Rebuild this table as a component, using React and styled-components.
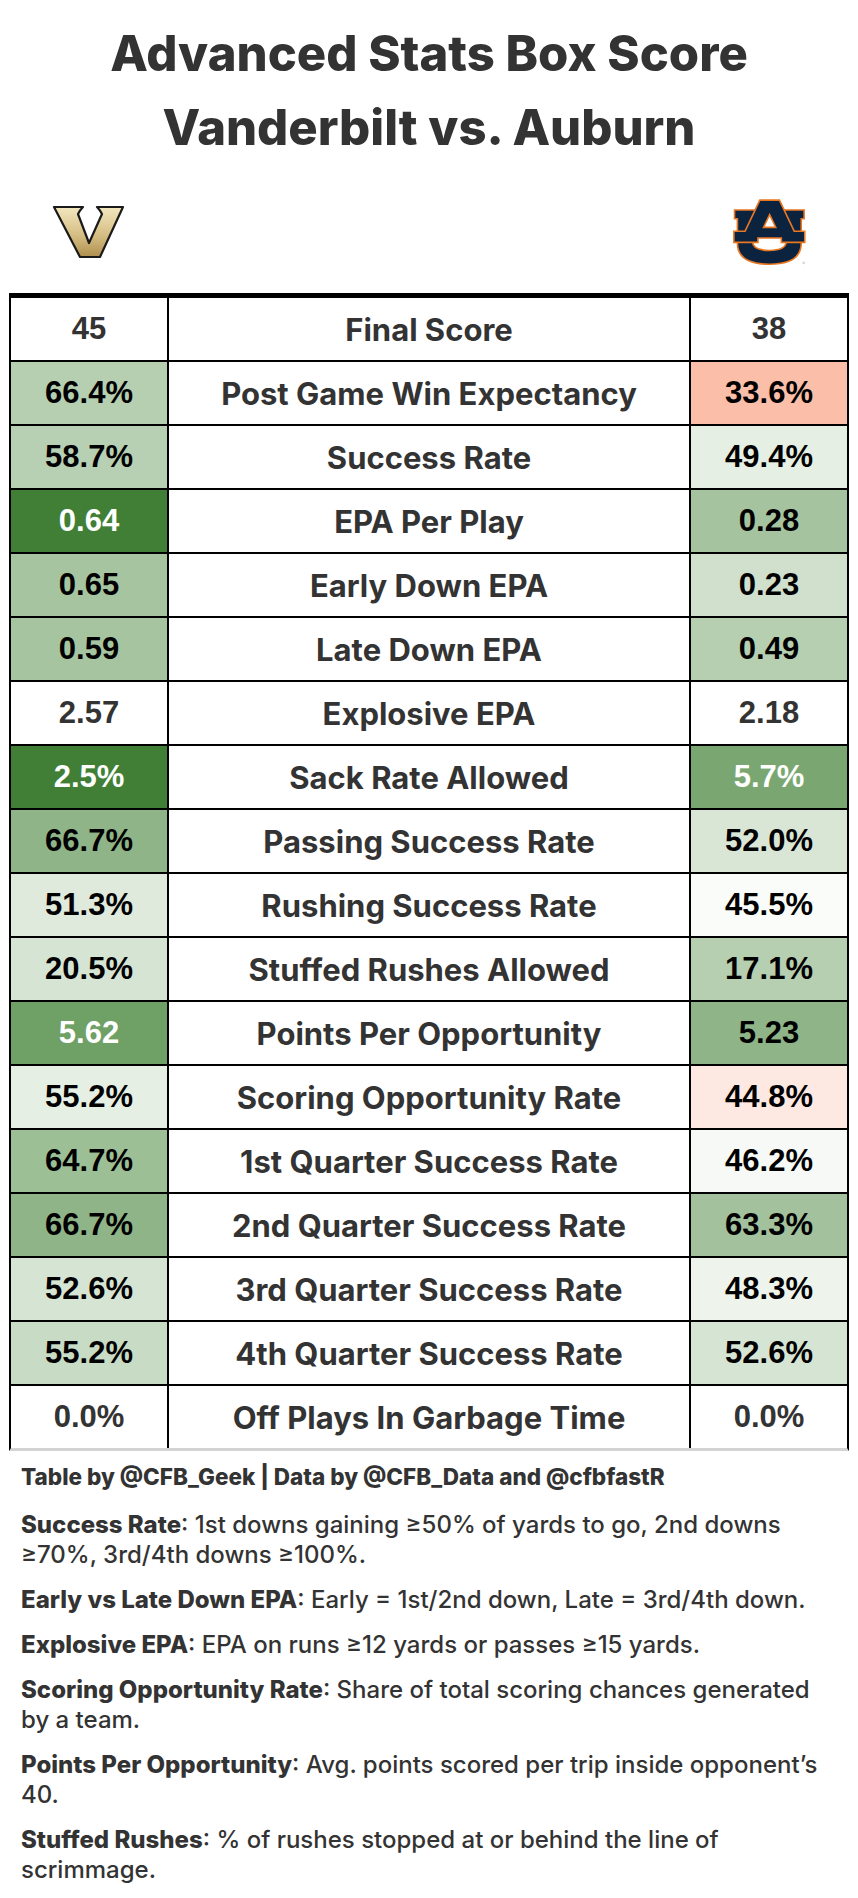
import React from 'react';
import styled, { createGlobalStyle } from 'styled-components';

const GlobalStyle = createGlobalStyle`
  html, body {
    margin: 0;
    padding: 0;
    background: #ffffff;
  }
  body {
    font-family: "Inter", "Roboto", sans-serif;
    color: #333333;
  }
`;

const Page = styled.div`
  width: 858px;
  padding: 17px 9px 20px;
  box-sizing: border-box;
`;

const Title = styled.h1`
  margin: 0;
  text-align: center;
  font-family: "Inter", sans-serif;
  font-weight: 800;
  font-size: 49px;
  line-height: 74px;
  color: #333333;
`;

const LogoRow = styled.div`
  display: grid;
  grid-template-columns: 158px 522px 160px;
  align-items: center;
  justify-items: center;
  height: 122px;
  padding-top: 6px;
`;

const Table = styled.div`
  display: flex;
  flex-direction: column;
  gap: 2px;
  background: #000000;
  border-top: 5px solid #000000;
  border-left: 2px solid #000000;
  border-right: 2px solid #000000;
  border-bottom: 3px solid #d3d3d3;
`;

const Row = styled.div`
  display: grid;
  grid-template-columns: 156px 520px 156px;
  column-gap: 2px;
  height: 62px;
`;

const ValueCell = styled.div`
  display: flex;
  align-items: center;
  justify-content: center;
  background: ${({ $bg }) => $bg || '#ffffff'};
  color: ${({ $fg }) => $fg || '#000000'};
  font-family: "Liberation Sans", Arial, sans-serif;
  font-weight: 700;
  font-size: 31px;
`;

const LabelCell = styled.div`
  display: flex;
  align-items: center;
  justify-content: center;
  background: #ffffff;
  color: #333333;
  font-family: "Inter", sans-serif;
  font-weight: 700;
  font-size: 31px;
`;

const Notes = styled.div`
  width: 812px;
  padding: 11px 12px 0;
  font-family: "Inter", sans-serif;
  font-size: 24px;
  line-height: 30px;
  color: #333333;
  font-weight: 500;
`;

const Credit = styled.p`
  margin: 0 0 18px;
  font-size: 22.5px;
  font-weight: 800;
`;

const Note = styled.p`
  margin: 0 0 15px;
  b {
    font-weight: 800;
  }
`;

const VandyLogo = () => (
  <svg width="72" height="54" viewBox="-1 -1 72 54">
    <defs>
      <linearGradient id="vgold" x1="0" y1="0" x2="0" y2="1">
        <stop offset="0" stopColor="#f3e7bf" />
        <stop offset="0.55" stopColor="#d6bf85" />
        <stop offset="1" stopColor="#b08f4f" />
      </linearGradient>
    </defs>
    <path
      d="M1 1 H30 Q27 4 25 8 L36 37 L49 8 Q47 4 44 1 H70 L47 51 H27 Z"
      fill="url(#vgold)"
      stroke="#1a1a1a"
      strokeWidth="2.2"
      strokeLinejoin="round"
    />
  </svg>
);

const AuburnLogo = () => (
  <svg width="74" height="68" viewBox="60 24 230 212">
    <g fill="#0c2340" stroke="#e87722" strokeWidth="10" strokeLinejoin="miter" paintOrder="stroke">
      <path d="M70 64 H130 V86 H121 V160 Q121 190 176 190 Q231 190 231 160 V86 H222 V64 H282 V86 H273 V165 Q273 228 176 228 Q79 228 79 165 V86 H70 Z" />
      <path
        fillRule="evenodd"
        d="M148 33 H206 L252 130 H284 V160 H216 V146 H138 V160 H68 V130 H102 Z M177 70 L154 118 H200 Z"
      />
    </g>
    <circle cx="283" cy="226" r="3" fill="none" stroke="#777" strokeWidth="1" />
  </svg>
);

const rows = [
  { l: '66.4%', label: 'Post Game Win Expectancy', r: '33.6%', lb: '#b5cfb0', rb: '#fbbea8' },
  { l: '58.7%', label: 'Success Rate', r: '49.4%', lb: '#b7cfb2', rb: '#e6efe3' },
  { l: '0.64', label: 'EPA Per Play', r: '0.28', lb: '#417f37', lf: '#ffffff', rb: '#a6c39f' },
  { l: '0.65', label: 'Early Down EPA', r: '0.23', lb: '#a7c4a1', rb: '#d0e0cc' },
  { l: '0.59', label: 'Late Down EPA', r: '0.49', lb: '#a7c4a1', rb: '#b6cfb1' },
  { l: '2.57', label: 'Explosive EPA', r: '2.18', lf: '#333333', rf: '#333333' },
  { l: '2.5%', label: 'Sack Rate Allowed', r: '5.7%', lb: '#417f37', lf: '#ffffff', rb: '#7aa771', rf: '#ffffff' },
  { l: '66.7%', label: 'Passing Success Rate', r: '52.0%', lb: '#8fb487', rb: '#d9e6d6' },
  { l: '51.3%', label: 'Rushing Success Rate', r: '45.5%', lb: '#dfe9dc', rb: '#fafcfa' },
  { l: '20.5%', label: 'Stuffed Rushes Allowed', r: '17.1%', lb: '#d6e4d3', rb: '#b6cfb1' },
  { l: '5.62', label: 'Points Per Opportunity', r: '5.23', lb: '#6fa066', lf: '#ffffff', rb: '#8fb487' },
  { l: '55.2%', label: 'Scoring Opportunity Rate', r: '44.8%', lb: '#e6efe4', rb: '#fde9e2' },
  { l: '64.7%', label: '1st Quarter Success Rate', r: '46.2%', lb: '#9dbf96', rb: '#f6f9f5' },
  { l: '66.7%', label: '2nd Quarter Success Rate', r: '63.3%', lb: '#8fb487', rb: '#a3c19c' },
  { l: '52.6%', label: '3rd Quarter Success Rate', r: '48.3%', lb: '#d6e4d3', rb: '#eef4ec' },
  { l: '55.2%', label: '4th Quarter Success Rate', r: '52.6%', lb: '#c8dbc4', rb: '#d6e4d3' },
  { l: '0.0%', label: 'Off Plays In Garbage Time', r: '0.0%', lf: '#333333', rf: '#333333' },
];

const App = () => {
  return (
    <Page>
      <GlobalStyle />
      <Title>
        Advanced Stats Box Score
        <br />
        Vanderbilt vs. Auburn
      </Title>
      <LogoRow>
        <VandyLogo />
        <span />
        <AuburnLogo />
      </LogoRow>
      <Table>
        <Row>
          <ValueCell $fg="#333333">45</ValueCell>
          <LabelCell>Final Score</LabelCell>
          <ValueCell $fg="#333333">38</ValueCell>
        </Row>
        {rows.map((row) => (
          <Row key={row.label}>
            <ValueCell $bg={row.lb} $fg={row.lf}>{row.l}</ValueCell>
            <LabelCell>{row.label}</LabelCell>
            <ValueCell $bg={row.rb} $fg={row.rf}>{row.r}</ValueCell>
          </Row>
        ))}
      </Table>
      <Notes>
        <Credit>Table by @CFB_Geek | Data by @CFB_Data and @cfbfastR</Credit>
        <Note>
          <b>Success Rate</b>: 1st downs gaining ≥50% of yards to go, 2nd downs ≥70%, 3rd/4th downs ≥100%.
        </Note>
        <Note>
          <b>Early vs Late Down EPA</b>: Early = 1st/2nd down, Late = 3rd/4th down.
        </Note>
        <Note>
          <b>Explosive EPA</b>: EPA on runs ≥12 yards or passes ≥15 yards.
        </Note>
        <Note>
          <b>Scoring Opportunity Rate</b>: Share of total scoring chances generated by a team.
        </Note>
        <Note>
          <b>Points Per Opportunity</b>: Avg. points scored per trip inside opponent’s 40.
        </Note>
        <Note>
          <b>Stuffed Rushes</b>: % of rushes stopped at or behind the line of scrimmage.
        </Note>
      </Notes>
    </Page>
  );
};

export default App;
